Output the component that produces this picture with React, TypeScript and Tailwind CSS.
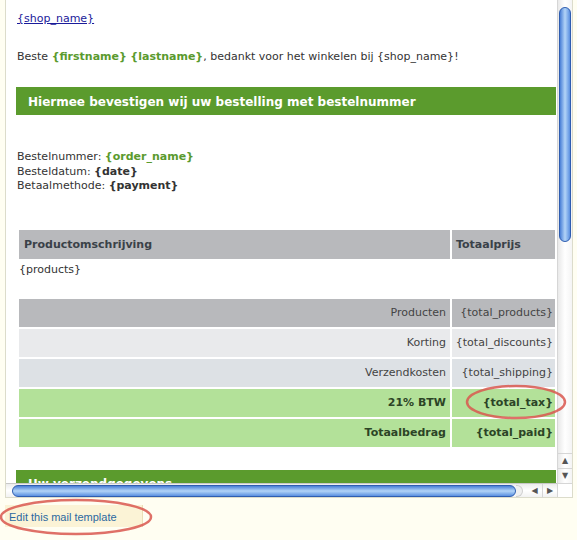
import React from 'react';

const totals = [
  { label: 'Producten', value: '{total_products}', row: 'bg-[#b8b9bc]', bold: false },
  { label: 'Korting', value: '{total_discounts}', row: 'bg-[#e9eaec]', bold: false },
  { label: 'Verzendkosten', value: '{total_shipping}', row: 'bg-[#dde1e5]', bold: false },
  { label: '21% BTW', value: '{total_tax}', row: 'bg-[#b3e199]', bold: true },
  { label: 'Totaalbedrag', value: '{total_paid}', row: 'bg-[#b3e199]', bold: true },
];

function VScroll() {
  return (
    <div className="relative flex w-[15px] flex-col border-l border-[#d6d6d6] bg-gradient-to-r from-[#e9e9e9] via-white to-[#f4f4f4]">
      {/* thumb */}
      <div className="mx-auto mt-[7px] h-[235px] w-[12px] rounded-full border border-[#2e5db0] bg-gradient-to-r from-[#4a7fd6] via-[#b3d4f7] to-[#5a8fe0]" />
      <div className="flex-1" />
      {/* arrows */}
      <div className="flex h-[15px] items-center justify-center border-t border-[#d6d6d6] text-[8px] text-[#555]">▲</div>
      <div className="flex h-[15px] items-center justify-center border-t border-[#d6d6d6] text-[8px] text-[#555]">▼</div>
    </div>
  );
}

function HScroll() {
  return (
    <div className="flex h-[14px]">
      <div className="flex w-[551px] items-center border-t border-[#c8c8c8] bg-gradient-to-b from-[#ececec] via-white to-[#f2f2f2]">
        <div className="ml-[6px] h-[12px] w-[504px] rounded-full border border-[#2e5db0] bg-gradient-to-b from-[#4a7fd6] via-[#b3d4f7] to-[#5a8fe0]" />
        <div className="h-[12px] w-[7px] rounded-r-full border border-l-0 border-[#cfcfcf] bg-[#f0f0f0]" />
        <div className="ml-[4px] flex w-[15px] items-center justify-center text-[8px] text-[#555]">◀</div>
        <div className="flex w-[15px] items-center justify-center border-l border-[#d6d6d6] text-[8px] text-[#555]">▶</div>
      </div>
      <div className="w-[15px] border-l border-t border-[#d6d6d6] bg-white" />
    </div>
  );
}

export default function App() {
  return (
    <div className="relative h-[540px] w-[577px] overflow-hidden bg-[#fffef2] pl-[5px] font-['DejaVu_Sans',Verdana,sans-serif] text-[11px] leading-[14px] text-[#333]">
      {/* mail preview frame */}
      <div className="w-[568px] border border-t-0 border-[#dcdccb] bg-white">
        <div className="flex h-[483px]">
          <div className="w-[551px] overflow-hidden pl-[10px] pt-[12px]">
            <a className="ml-[1px] text-[#1b1b9a] underline">{'{shop_name}'}</a>

            <p className="ml-[1px] mt-[24px]">
              Beste <b className="text-[#5a9a2e]">{'{firstname}'}</b>{' '}
              <b className="text-[#5a9a2e]">{'{lastname}'}</b>, bedankt voor het winkelen bij {'{shop_name}'}!
            </p>

            <div className="mt-[23px] flex h-[28px] w-[540px] items-center bg-[#5b9b2d] pl-[12px] pt-[1px] text-[12px] font-bold text-white">
              Hiermee bevestigen wij uw bestelling met bestelnummer
            </div>

            <div className="ml-[1px] mt-[35px] leading-[14.5px]">
              <div>
                Bestelnummer: <b className="text-[#5a9a2e]">{'{order_name}'}</b>
              </div>
              <div>
                Besteldatum: <b>{'{date}'}</b>
              </div>
              <div>
                Betaalmethode: <b>{'{payment}'}</b>
              </div>
            </div>

            {/* products table */}
            <div className="ml-[3px] mt-[36px] w-[536px]">
              <div className="flex h-[29px] gap-[2px] font-bold text-[#3a4148]">
                <div className="flex w-[431px] items-center bg-[#b8b9bc] pl-[5px] pt-[1px]">Productomschrijving</div>
                <div className="flex flex-1 items-center bg-[#b8b9bc] pl-[4px] pt-[1px]">Totaalprijs</div>
              </div>
              <div className="h-[40px] pt-[4px]">{'{products}'}</div>
              <div className="flex flex-col gap-[2px]">
                {totals.map((t) => (
                  <div key={t.label} className={`flex h-[28px] gap-[2px] ${t.bold ? 'font-bold text-[#2c4426]' : 'text-[#444]'}`}>
                    <div className={`flex w-[431px] items-center justify-end pr-[4px] ${t.row}`}>{t.label}</div>
                    <div className={`flex flex-1 items-center justify-end pr-[2px] ${t.row}`}>{t.value}</div>
                  </div>
                ))}
              </div>
            </div>

            <div className="mt-[23px] flex h-[28px] w-[540px] items-start bg-[#5b9b2d] pl-[12px] pt-[7px] text-[12px] font-bold text-white">
              Uw verzendgegevens
            </div>
          </div>
          <VScroll />
        </div>
        <HScroll />
      </div>

      {/* edit link */}
      <div className="mt-[7px] flex h-[22px] w-[138px] items-center border-r border-[#eadfb8] bg-[#fbf3d6] pl-[4px] pt-[1px] font-['Liberation_Sans',Arial,sans-serif] text-[11px] text-[#2b68a0]">
        Edit this mail template
      </div>

      {/* hand-drawn highlights */}
      <svg className="pointer-events-none absolute left-0 top-0" width="577" height="540">
        <ellipse cx="516" cy="402" rx="49" ry="16" fill="none" stroke="#d9574f" strokeWidth="2.5" opacity="0.85" />
        <ellipse cx="76" cy="517" rx="75" ry="17" fill="none" stroke="#d9574f" strokeWidth="2.5" opacity="0.85" />
      </svg>
    </div>
  );
}
